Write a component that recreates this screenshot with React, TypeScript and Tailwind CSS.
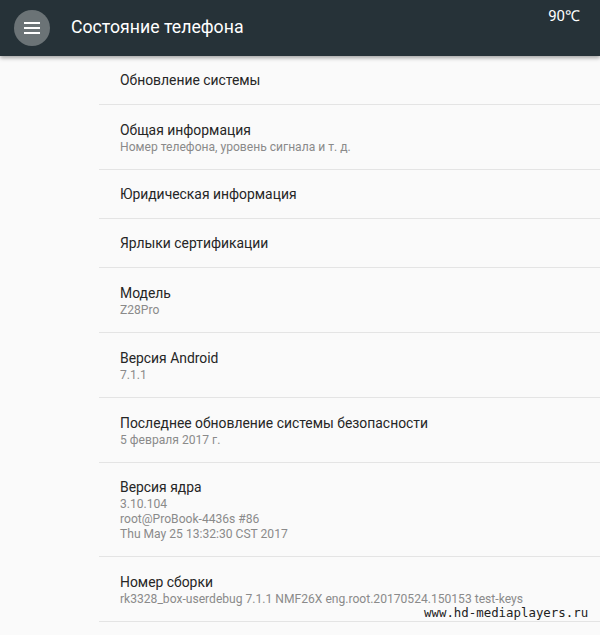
import React from "react";

type Item = { title: string; lines?: string[]; h: string };

const ITEMS: Item[] = [
  { title: "Обновление системы", h: "h-[49px]" },
  { title: "Общая информация", lines: ["Номер телефона, уровень сигнала и т. д."], h: "h-[65px]" },
  { title: "Юридическая информация", h: "h-[49px]" },
  { title: "Ярлыки сертификации", h: "h-[49px]" },
  { title: "Модель", lines: ["Z28Pro"], h: "h-[65px]" },
  { title: "Версия Android", lines: ["7.1.1"], h: "h-[65px]" },
  { title: "Последнее обновление системы безопасности", lines: ["5 февраля 2017 г."], h: "h-[65px]" },
  {
    title: "Версия ядра",
    lines: ["3.10.104", "root@ProBook-4436s #86", "Thu May 25 13:32:30 CST 2017"],
    h: "h-[94px]",
  },
  {
    title: "Номер сборки",
    lines: ["rk3328_box-userdebug 7.1.1 NMF26X eng.root.20170524.150153 test-keys"],
    h: "h-[65px]",
  },
];

function MenuButton() {
  return (
    <div className="w-[36px] h-[36px] rounded-full bg-[#6b7376] flex flex-col items-center justify-center gap-[3px]">
      <span className="block w-[16px] h-[2px] bg-white" />
      <span className="block w-[16px] h-[2px] bg-white" />
      <span className="block w-[16px] h-[2px] bg-white" />
    </div>
  );
}

export default function App() {
  return (
    <div className="relative w-[600px] h-[635px] overflow-hidden bg-[#fafafa] font-['Roboto',sans-serif]">
      {/* Toolbar */}
      <header className="relative z-10 h-[56px] bg-[#263238] flex items-center pl-[14px] shadow-[0_2px_4px_rgba(0,0,0,0.35)]">
        <MenuButton />
        <h1 className="ml-[21px] text-[17.7px] text-white leading-none">Состояние телефона</h1>
        <span className="absolute right-[20px] top-[5px] text-[15px] text-white">90℃</span>
      </header>

      {/* Preference list */}
      <div className="ml-[99px]">
        {ITEMS.map((item) => (
          <div
            key={item.title}
            className={`${item.h} border-b border-[#e4e4e4] pl-[21px] flex flex-col justify-center`}
          >
            <div className="text-[13.9px] leading-[20px] text-[#262626]">{item.title}</div>
            {item.lines?.map((l) => (
              <div key={l} className="text-[12.1px] leading-[15px] text-[#8a8a8a]">
                {l}
              </div>
            ))}
          </div>
        ))}
      </div>

      {/* Watermark */}
      <span className="absolute left-[424px] top-[605px] text-[12.4px] leading-[16px] text-[#222] font-['DejaVu_Sans_Mono',monospace]">
        www.hd-mediaplayers.ru
      </span>
    </div>
  );
}
